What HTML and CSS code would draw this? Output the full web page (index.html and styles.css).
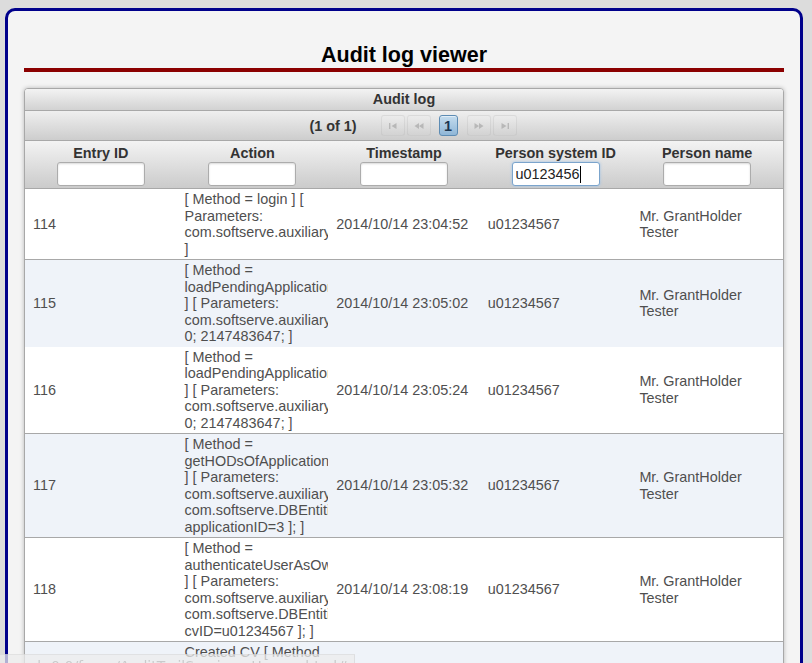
FILE: index.html
```html
<!DOCTYPE html>
<html>
<head>
<meta charset="utf-8">
<title>Audit log viewer</title>
<link rel="stylesheet" href="styles.css">
</head>
<body>
<div class="frame">
  <h1 class="title">Audit log viewer</h1>
  <div class="panel">
    <div class="panel-head">Audit log</div>
    <div class="paginator">
      <span class="report">(1 of 1)</span>
      <span class="pbtn dis first"><svg width="10" height="8" viewBox="0 0 10 8"><rect x="1" y="1" width="1.4" height="6" fill="#9a9a9a"/><path d="M8.5 1 L3.5 4 L8.5 7 Z" fill="#9a9a9a"/></svg></span>
      <span class="pbtn dis prev"><svg width="12" height="8" viewBox="0 0 12 8"><path d="M6 1 L1.5 4 L6 7 Z M10.5 1 L6 4 L10.5 7 Z" fill="#9a9a9a"/></svg></span>
      <span class="pbtn page">1</span>
      <span class="pbtn dis next"><svg width="12" height="8" viewBox="0 0 12 8"><path d="M1.5 1 L6 4 L1.5 7 Z M6 1 L10.5 4 L6 7 Z" fill="#9a9a9a"/></svg></span>
      <span class="pbtn dis last"><svg width="10" height="8" viewBox="0 0 10 8"><path d="M1.5 1 L6.5 4 L1.5 7 Z" fill="#9a9a9a"/><rect x="7.6" y="1" width="1.4" height="6" fill="#9a9a9a"/></svg></span>
    </div>
    <table class="grid">
      <colgroup><col><col><col><col><col></colgroup>
      <thead>
        <tr>
          <th><div class="th-label">Entry ID</div><input class="filter" type="text"></th>
          <th><div class="th-label">Action</div><input class="filter" type="text"></th>
          <th><div class="th-label">Timestamp</div><input class="filter" type="text"></th>
          <th><div class="th-label">Person system ID</div><input class="filter focused" type="text" value="u0123456"><span class="caret"></span></th>
          <th><div class="th-label">Person name</div><input class="filter" type="text"></th>
        </tr>
      </thead>
      <tbody>
        <tr class="odd">
          <td>114</td>
          <td>[ Method = login ] [ Parameters: com.softserve.auxiliary.requestEntities.LoginRequest@3c7a ]</td>
          <td>2014/10/14 23:04:52</td>
          <td>u01234567</td>
          <td>Mr. GrantHolder Tester</td>
        </tr>
        <tr class="even sep">
          <td>115</td>
          <td>[ Method = loadPendingApplicationsForHOD ] [ Parameters: com.softserve.auxiliary.requestEntities.Pagination@1f2b; 0; 2147483647; ]</td>
          <td>2014/10/14 23:05:02</td>
          <td>u01234567</td>
          <td>Mr. GrantHolder Tester</td>
        </tr>
        <tr class="odd">
          <td>116</td>
          <td>[ Method = loadPendingApplicationsForHOD ] [ Parameters: com.softserve.auxiliary.requestEntities.Pagination@5d1e; 0; 2147483647; ]</td>
          <td>2014/10/14 23:05:24</td>
          <td>u01234567</td>
          <td>Mr. GrantHolder Tester</td>
        </tr>
        <tr class="even sep">
          <td>117</td>
          <td>[ Method = getHODsOfApplications ] [ Parameters: com.softserve.auxiliary.requestEntities.Session@6a1b com.softserve.DBEntities.Application@7e2c applicationID=3 ]; ]</td>
          <td>2014/10/14 23:05:32</td>
          <td>u01234567</td>
          <td>Mr. GrantHolder Tester</td>
        </tr>
        <tr class="odd sep">
          <td>118</td>
          <td>[ Method = authenticateUserAsOwnerOfCV ] [ Parameters: com.softserve.auxiliary.requestEntities.Session@2b4d com.softserve.DBEntities.CV@4f3a cvID=u01234567 ]; ]</td>
          <td>2014/10/14 23:08:19</td>
          <td>u01234567</td>
          <td>Mr. GrantHolder Tester</td>
        </tr>
        <tr class="even sep">
          <td>119</td>
          <td>Created CV [ Method = createCV ] [ Parameters: com.softserve.auxiliary.requestEntities.Session@2b4d com.softserve.DBEntities.CV@4f3a ]</td>
          <td>2014/10/14 23:09:41</td>
          <td>u01234567</td>
          <td>Mr. GrantHolder Tester</td>
        </tr>
      </tbody>
    </table>
  </div>
</div>
<div class="status"><span>http://localhost:8080/application-web-0.0/faces/AuditTrailServices_Home.xhtml#</span></div>
</body>
</html>
```
FILE: styles.css
```css
html, body {
  margin: 0;
  padding: 0;
  height: 663px;
  overflow: hidden;
}
body {
  background: #dcdcdc;
  font-family: "Liberation Sans", Arial, sans-serif;
}
.frame {
  margin: 8px 9px 0 5px;
  border: 3px solid #00008b;
  border-bottom: none;
  border-radius: 10px 10px 0 0;
  background: #f4f4f4;
  padding: 0 16px;
  min-height: 720px;
}
.title {
  margin: 0;
  padding-top: 32px;
  font-size: 21.5px;
  line-height: 25px;
  font-weight: bold;
  text-align: center;
  color: #000;
  border-bottom: 4px solid #8b0000;
}
.panel {
  margin-top: 16px;
  border: 1px solid #a8a8a8;
  border-radius: 4px 4px 0 0;
  background: #fff;
  box-shadow: 0 0 4px rgba(0, 0, 0, 0.25);
  overflow: hidden;
}
.panel-head {
  height: 21px;
  line-height: 21px;
  border-bottom: 1px solid #a8a8a8;
  background: linear-gradient(#f3f3f3, #d2d2d2);
  text-align: center;
  font-weight: bold;
  font-size: 14.4px;
  color: #333;
}
.paginator {
  height: 29px;
  border-bottom: 1px solid #a8a8a8;
  background: linear-gradient(#efefef, #cdcdcd);
  display: flex;
  align-items: center;
  justify-content: center;
  padding-left: 18px;
  font-size: 14.4px;
  color: #333;
}
.report {
  font-weight: bold;
  margin-right: 24px;
}
.pbtn {
  box-sizing: border-box;
  height: 21px;
  display: flex;
  align-items: center;
  justify-content: center;
  border-radius: 3px;
}
.pbtn.dis {
  width: 24px;
  border: 1px solid rgba(160, 160, 160, 0.35);
  background: linear-gradient(rgba(255,255,255,0.25), rgba(210,210,210,0.25));
  opacity: 0.55;
}
.first, .next { margin-right: 2px; }
.prev { margin-right: 8px; }
.page {
  width: 19px;
  margin-right: 9px;
  border: 1px solid #5d8cb4;
  background: linear-gradient(#c4dcee, #8fb6d7);
  font-weight: bold;
  color: #1d3650;
  font-size: 14.4px;
  box-shadow: inset 0 1px 0 rgba(255,255,255,0.5);
}
.grid {
  width: 100%;
  border-collapse: collapse;
  table-layout: fixed;
}
.grid th {
  background: linear-gradient(#f3f3f3, #cbcbcb);
  padding: 4px 8px 2px;
  border-bottom: 1px solid #a8a8a8;
  font-weight: bold;
  font-size: 14.4px;
  color: #333;
  position: relative;
}
.th-label {
  line-height: 17px;
  white-space: nowrap;
}
.filter {
  display: block;
  box-sizing: border-box;
  width: 88px;
  height: 24px;
  margin: 0 auto;
  padding: 0 3px;
  border: 1px solid #acacac;
  border-radius: 3px;
  background: #fff;
  box-shadow: inset 0 1px 2px rgba(0, 0, 0, 0.15);
  font-family: "Liberation Sans", Arial, sans-serif;
  font-size: 14.4px;
  color: #222;
  outline: none;
}
.filter.focused {
  border-color: #7ba4cc;
  box-shadow: 0 0 3px #9ec3e8;
}
.caret {
  position: absolute;
  left: 100px;
  top: 25px;
  width: 1px;
  height: 17px;
  background: #000;
}
.grid td {
  padding: 2px 8px;
  font-size: 14.4px;
  line-height: 16.5px;
  color: #4f4f4f;
  vertical-align: middle;
  overflow: hidden;
}
.grid tr.odd td { background: #fff; }
.grid tr.even td { background: #eff3f9; }
.grid tr.sep td { border-top: 1px solid #a8a8a8; }
.status {
  position: fixed;
  left: 0;
  top: 654px;
  width: 355px;
  height: 22px;
  display: flex;
  justify-content: flex-end;
  overflow: hidden;
  background: rgba(236, 236, 236, 0.75);
  border-top: 1px solid rgba(0, 0, 0, 0.05);
  border-right: 1px solid rgba(0, 0, 0, 0.06);
  padding-right: 5px;
  box-sizing: border-box;
}
.status span {
  white-space: nowrap;
  flex: none;
  font-family: "DejaVu Sans", sans-serif;
  font-size: 14px;
  line-height: 18px;
  padding-top: 2px;
  color: rgba(120, 120, 120, 0.3);
}
```
